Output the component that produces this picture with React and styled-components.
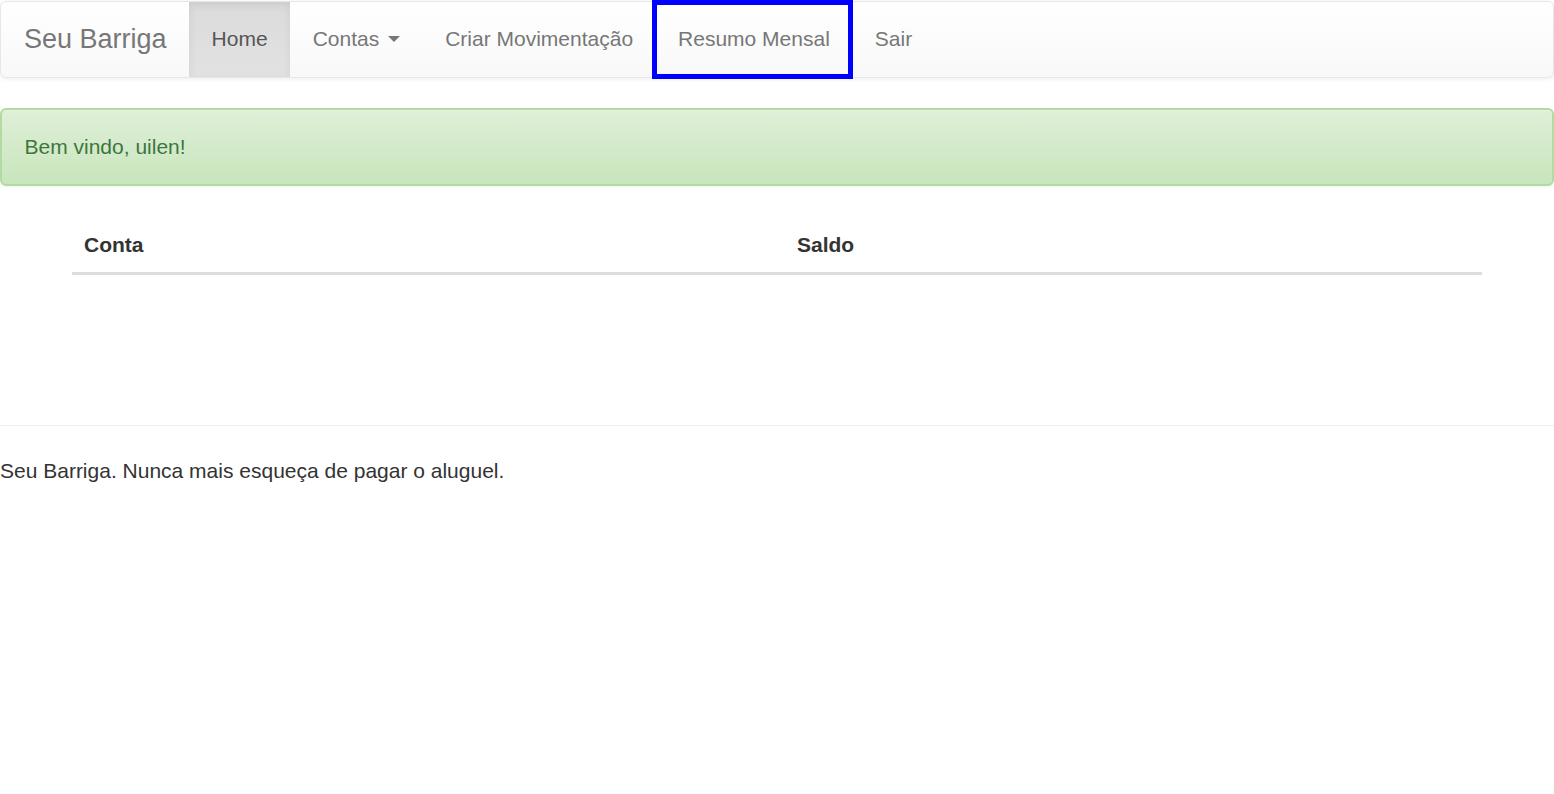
import React from 'react';
import styled, { createGlobalStyle } from 'styled-components';

const GlobalStyle = createGlobalStyle`
  * { box-sizing: border-box; }
  body {
    margin: 0;
    background: #fff;
    color: #333;
    font-family: "Liberation Sans", Arial, Helvetica, sans-serif;
    font-size: 21px;
    line-height: 30px;
  }
`;

const Navbar = styled.nav`
  margin-top: 1px;
  height: 77px;
  display: flex;
  align-items: stretch;
  border: 1px solid #e7e7e7;
  border-radius: 6px;
  background: linear-gradient(to bottom, #fff 0, #f8f8f8 100%);
  box-shadow: inset 0 1px 0 rgba(255, 255, 255, 0.15), 0 1px 5px rgba(0, 0, 0, 0.075);
`;

const Brand = styled.a`
  display: flex;
  align-items: center;
  padding: 0 22.5px 2px 23px;
  font-size: 27px;
  color: #777;
  text-shadow: 0 1px 0 rgba(255, 255, 255, 0.25);
  text-decoration: none;
`;

const NavList = styled.ul`
  display: flex;
  margin: 0;
  padding: 0;
  list-style: none;
`;

const NavItem = styled.li`
  position: relative;
  display: flex;
  align-items: center;
  padding: 0 22.5px 2px;
  color: ${({ $active }) => ($active ? '#555' : '#777')};
  background: ${({ $active }) =>
    $active ? 'linear-gradient(to bottom, #dbdbdb 0, #e2e2e2 100%)' : 'transparent'};
  box-shadow: ${({ $active }) => ($active ? 'inset 0 3px 9px rgba(0, 0, 0, 0.075)' : 'none')};
  text-shadow: 0 1px 0 rgba(255, 255, 255, 0.25);
  cursor: pointer;

  ${({ $focused }) =>
    $focused &&
    `
    &::after {
      content: '';
      position: absolute;
      top: -2px;
      left: -4px;
      right: -1px;
      bottom: -2px;
      border: 5px solid #0000ff;
    }
  `}
`;

const Caret = styled.span`
  display: inline-block;
  width: 0;
  height: 0;
  margin-left: 9px;
  border-top: 6px solid #777;
  border-left: 6px solid transparent;
  border-right: 6px solid transparent;
`;

const Alert = styled.div`
  margin-top: 30px;
  padding: 22px 22.5px;
  border: 2px solid #b2dba1;
  border-radius: 6px;
  color: #3c763d;
  background: linear-gradient(to bottom, #dff0d8 0, #c8e5bc 100%);
  text-shadow: 0 1px 0 rgba(255, 255, 255, 0.2);
  box-shadow: inset 0 1px 0 rgba(255, 255, 255, 0.25), 0 1px 2px rgba(0, 0, 0, 0.05);
`;

const Table = styled.table`
  width: calc(100% - 144px);
  margin: 32px 72px 0;
  border-collapse: collapse;
`;

const Th = styled.th`
  width: ${({ $w }) => $w || 'auto'};
  padding: 12px;
  text-align: left;
  font-weight: bold;
  color: #333;
  border-bottom: 3px solid #ddd;
`;

const Rule = styled.hr`
  margin: 150px 0 30px;
  border: 0;
  border-top: 1px solid #eee;
`;

const Footer = styled.footer`
  color: #333;
`;

export default function App() {
  return (
    <>
      <GlobalStyle />
      <Navbar>
        <Brand href="#">Seu Barriga</Brand>
        <NavList>
          <NavItem $active>Home</NavItem>
          <NavItem>
            Contas <Caret />
          </NavItem>
          <NavItem>Criar Movimentação</NavItem>
          <NavItem $focused>Resumo Mensal</NavItem>
          <NavItem>Sair</NavItem>
        </NavList>
      </Navbar>
      <Alert>Bem vindo, uilen!</Alert>
      <Table>
        <thead>
          <tr>
            <Th $w="713px">Conta</Th>
            <Th>Saldo</Th>
          </tr>
        </thead>
        <tbody />
      </Table>
      <Rule />
      <Footer>Seu Barriga. Nunca mais esqueça de pagar o aluguel.</Footer>
    </>
  );
}
